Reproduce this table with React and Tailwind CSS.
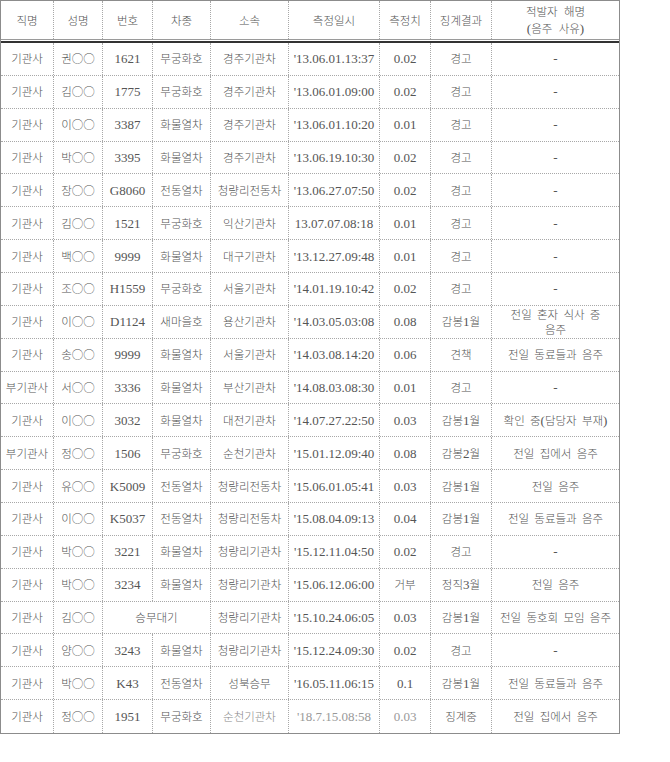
const ROWS = [
  ['기관사', '권○○', '1621', '무궁화호', '경주기관차', "'13.06.01.13:37", '0.02', '경고', '-'],
  ['기관사', '김○○', '1775', '무궁화호', '경주기관차', "'13.06.01.09:00", '0.02', '경고', '-'],
  ['기관사', '이○○', '3387', '화물열차', '경주기관차', "'13.06.01.10:20", '0.01', '경고', '-'],
  ['기관사', '박○○', '3395', '화물열차', '경주기관차', "'13.06.19.10:30", '0.02', '경고', '-'],
  ['기관사', '장○○', 'G8060', '전동열차', '청량리전동차', "'13.06.27.07:50", '0.02', '경고', '-'],
  ['기관사', '김○○', '1521', '무궁화호', '익산기관차', '13.07.07.08:18', '0.01', '경고', '-'],
  ['기관사', '백○○', '9999', '화물열차', '대구기관차', "'13.12.27.09:48", '0.01', '경고', '-'],
  ['기관사', '조○○', 'H1559', '무궁화호', '서울기관차', "'14.01.19.10:42", '0.02', '경고', '-'],
  ['기관사', '이○○', 'D1124', '새마을호', '용산기관차', "'14.03.05.03:08", '0.08', '감봉1월', '전일 혼자 식사 중\n음주'],
  ['기관사', '송○○', '9999', '화물열차', '서울기관차', "'14.03.08.14:20", '0.06', '견책', '전일 동료들과 음주'],
  ['부기관사', '서○○', '3336', '화물열차', '부산기관차', "'14.08.03.08:30", '0.01', '경고', '-'],
  ['기관사', '이○○', '3032', '화물열차', '대전기관차', "'14.07.27.22:50", '0.03', '감봉1월', '확인 중(담당자 부재)'],
  ['부기관사', '정○○', '1506', '무궁화호', '순천기관차', "'15.01.12.09:40", '0.08', '감봉2월', '전일 집에서 음주'],
  ['기관사', '유○○', 'K5009', '전동열차', '청량리전동차', "'15.06.01.05:41", '0.03', '감봉1월', '전일 음주'],
  ['기관사', '이○○', 'K5037', '전동열차', '청량리전동차', "'15.08.04.09:13", '0.04', '감봉1월', '전일 동료들과 음주'],
  ['기관사', '박○○', '3221', '화물열차', '청량리기관차', "'15.12.11.04:50", '0.02', '경고', '-'],
  ['기관사', '박○○', '3234', '화물열차', '청량리기관차', "'15.06.12.06:00", '거부', '정직3월', '전일 음주'],
  ['기관사', '김○○', null, '승무대기', '청량리기관차', "'15.10.24.06:05", '0.03', '감봉1월', '전일 동호회 모임 음주'],
  ['기관사', '양○○', '3243', '화물열차', '청량리기관차', "'15.12.24.09:30", '0.02', '경고', '-'],
  ['기관사', '박○○', 'K43', '전동열차', '성북승무', "'16.05.11.06:15", '0.1', '감봉1월', '전일 동료들과 음주'],
  ['기관사', '정○○', '1951', '무궁화호', '순천기관차', "'18.7.15.08:58", '0.03', '징계중', '전일 집에서 음주'],
]

const HEADERS = ['직명', '성명', '번호', '차종', '소속', '측정일시', '측정치', '징계결과']

// hangul in the CJK face, digits and latin in the serif face
function Txt({ children }) {
  const parts = String(children).split(/([\u3131-\uD79D○]+)/)
  return parts.map((part, i) =>
    /[\u3131-\uD79D○]/.test(part) ? (
      <span key={i} className="font-['Noto_Sans_CJK_KR',sans-serif] text-[11.5px] font-light">
        {part}
      </span>
    ) : (
      <span key={i}>{part}</span>
    )
  )
}

const cell = 'flex items-center justify-center text-center border-r border-dotted border-[#a8a8a8] leading-[15px]'
const cols = 'grid grid-cols-[53px_49px_50px_58px_78px_91px_51px_61px_1fr]'

export default function App() {
  return (
    <div className="h-[762px] w-[670px] bg-white font-['Liberation_Serif','Noto_Sans_CJK_KR',serif] text-[13px] text-[#555]">
      <div className="w-[620px] border border-[#8c8c8c]">
        <div className={`${cols} h-[39px] border-b border-[#9a9a9a]`}>
          {HEADERS.map((h) => (
            <div key={h} className={cell}>
              <Txt>{h}</Txt>
            </div>
          ))}
          <div className="flex flex-col items-center justify-center leading-[16px] [word-spacing:3px]">
            <span><Txt>적발자 해명</Txt></span>
            <span><Txt>(음주 사유)</Txt></span>
          </div>
        </div>
        <div className="h-px bg-white" />
        <div className="h-[2px] bg-[#333]" />

        {ROWS.map((r, idx) => {
          const last = idx === ROWS.length - 1
          return (
            <div
              key={idx}
              className={`${cols} h-[32.86px] ${last ? '' : 'border-b border-dotted border-[#a8a8a8]'}`}
            >
              <div className={cell}><Txt>{r[0]}</Txt></div>
              <div className={cell}><Txt>{r[1]}</Txt></div>
              {r[2] === null ? (
                <div className={`${cell} col-span-2`}><Txt>{r[3]}</Txt></div>
              ) : (
                <>
                  <div className={cell}><Txt>{r[2]}</Txt></div>
                  <div className={cell}><Txt>{r[3]}</Txt></div>
                </>
              )}
              <div className={`${cell} ${last ? 'text-[#888]' : ''}`}><Txt>{r[4]}</Txt></div>
              <div className={`${cell} ${last ? 'text-[#999]' : ''}`}><Txt>{r[5]}</Txt></div>
              <div className={`${cell} ${last ? 'text-[#999]' : ''}`}><Txt>{r[6]}</Txt></div>
              <div className={cell}><Txt>{r[7]}</Txt></div>
              <div className="flex items-center justify-center whitespace-pre-line break-keep text-center leading-[15px] [word-spacing:2px]">
                <span><Txt>{r[8]}</Txt></span>
              </div>
            </div>
          )
        })}
      </div>
    </div>
  )
}
